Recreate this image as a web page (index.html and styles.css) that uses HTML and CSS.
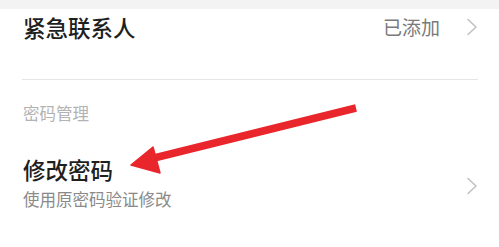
FILE: index.html
```html
<!DOCTYPE html>
<html lang="zh-CN">
<head>
<meta charset="utf-8">
<title>账号与安全</title>
<link rel="stylesheet" href="styles.css">
</head>
<body>
<div class="page">
  <div class="top-band"></div>
  <div class="row row-contact">
    <span class="row-title">紧急联系人</span>
    <div class="row-right">
      <span class="row-value">已添加</span>
      <svg class="chev" width="12" height="18" viewBox="0 0 12 18"><polyline points="2,1.5 10,9 2,16.5" fill="none" stroke="#c2c2c2" stroke-width="1.6" stroke-linejoin="round" stroke-linecap="round"/></svg>
    </div>
  </div>
  <div class="divider"></div>
  <div class="section-head">密码管理</div>
  <div class="row row-password">
    <div class="row-text">
      <span class="row-title">修改密码</span>
      <span class="row-sub">使用原密码验证修改</span>
    </div>
    <svg class="chev" width="12" height="18" viewBox="0 0 12 18"><polyline points="2,1.5 10,9 2,16.5" fill="none" stroke="#c2c2c2" stroke-width="1.6" stroke-linejoin="round" stroke-linecap="round"/></svg>
  </div>
  <svg class="annot" width="499" height="247" viewBox="0 0 499 247">
    <line x1="150" y1="159" x2="356" y2="108" stroke="#e8262c" stroke-width="7.5" stroke-linecap="butt"/>
    <polygon points="131,165 153,147 160,173" fill="#e8262c" stroke="#e8262c" stroke-width="1.5" stroke-linejoin="round"/>
  </svg>
</div>
</body>
</html>
```

FILE: styles.css
```css
html, body {
  margin: 0;
  padding: 0;
  background: #ffffff;
}
.page {
  position: relative;
  width: 499px;
  height: 247px;
  overflow: hidden;
  font-family: "Noto Sans CJK SC", "Noto Sans", sans-serif;
  background: #ffffff;
}
.top-band {
  height: 9px;
  background: #f3f3f3;
}
.row {
  display: flex;
  align-items: center;
  justify-content: space-between;
  padding: 0 21px 0 23px;
}
.row-contact {
  padding-top: 3px;
  height: 67px;
  align-items: flex-start;
}
.row-title {
  font-size: 22.5px;
  line-height: 30px;
  font-weight: 500;
  color: #1f1f1f;
}
.row-right {
  display: flex;
  align-items: center;
  gap: 26px;
  height: 30px;
}
.row-value {
  font-size: 19px;
  color: #7a7a7a;
  line-height: 30px;
}
.chev {
  display: block;
}
.divider {
  height: 1px;
  margin: 0 21px 0 22px;
  background: #e6e6e6;
}
.section-head {
  margin-top: 23px;
  padding-left: 23px;
  font-size: 16.5px;
  line-height: 20px;
  color: #b3b3b3;
}
.row-password {
  margin-top: 32px;
  align-items: center;
}
.row-text {
  display: flex;
  flex-direction: column;
}
.row-password .row-title {
  line-height: 28px;
}
.row-sub {
  margin-top: 5px;
  font-size: 16.5px;
  line-height: 22px;
  color: #8a8a8a;
}
.row-password .chev {
  margin-top: 6px;
}
.annot {
  position: absolute;
  left: 0;
  top: 0;
  pointer-events: none;
}
```
